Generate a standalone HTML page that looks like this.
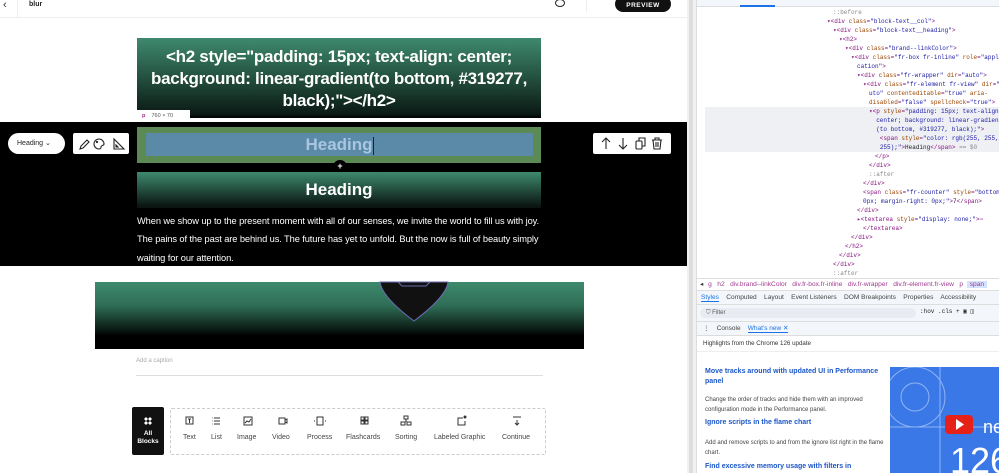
<!DOCTYPE html>
<html><head><meta charset="utf-8"><style>
*{margin:0;padding:0;box-sizing:border-box}
body{width:999px;height:473px;overflow:hidden;background:#fff;font-family:"Liberation Sans",sans-serif;position:relative}
.a{position:absolute}
.mono{font-family:"Liberation Mono",monospace;font-size:6px;color:#881280;white-space:nowrap}
.mono .at{color:#994500}.mono .v{color:#1a1aa6}.mono .t{color:#222}
</style></head><body>
<div class="a" style="left:0;top:0;width:687px;height:18px;background:#fff;border-bottom:1px solid #eee"></div>
<div class="a" style="left:3px;top:-1px;font-size:11px;color:#333">‹</div>
<div class="a" style="left:17px;top:0;width:1px;height:18px;background:#eee"></div>
<div class="a" style="left:29px;top:1px;font-size:7px;font-weight:bold;color:#222">blur</div>
<div class="a" style="left:555px;top:-1px;width:10px;height:8px;border:1.2px solid #222;border-radius:50%"></div>
<div class="a" style="left:586px;top:0;width:1px;height:12px;background:#eee"></div>
<div class="a" style="left:615px;top:-4px;width:56px;height:16px;background:#111;border-radius:8px;color:#fff;font-size:6.5px;font-weight:bold;text-align:center;line-height:19px;letter-spacing:.5px">PREVIEW</div>

<div class="a" style="left:137px;top:38px;width:404px;height:80px;background:linear-gradient(#3e8a6e,#0b1a14 95%,#000);color:#fff;font-size:17px;font-weight:bold;text-align:center;line-height:22px;padding-top:8px;letter-spacing:-.3px">&lt;h2 style="padding: 15px; text-align: center;<br>background: linear-gradient(to bottom, #319277,<br>black);"&gt;&lt;/h2&gt;</div>
<div class="a" style="left:137px;top:110px;width:53px;height:13px;background:#fff;font-size:5.5px;color:#555;line-height:13px;padding-left:5px"><span style="color:#a03090;font-weight:bold">p</span>&nbsp;&nbsp;&nbsp; 760 × 70</div>

<div class="a" style="left:0;top:122px;width:687px;height:144px;background:#000"></div>
<div class="a" style="left:8px;top:133px;width:57px;height:21px;background:#fff;border-radius:11px;font-size:7px;color:#222;line-height:21px;padding-left:9px">Heading <span style="font-size:7px">⌄</span></div>
<div class="a" style="left:73px;top:133px;width:56px;height:21px;background:#fff;border-radius:2px"></div>
<svg class="a" style="left:77px;top:137px" width="50" height="14" viewBox="0 0 50 14" fill="none" stroke="#222" stroke-width="1.1"><path d="M3 12l1-3 6-6 2 2-6 6z"/><path d="M22 12a5 5 0 1 1 5-5c0 2-3 1-3 3s-1 2-2 2z"/><circle cx="20" cy="5" r=".6"/><path d="M37 2v10h10z M39 8v2h2z"/></svg>
<div class="a" style="left:137px;top:127px;width:404px;height:36px;background:#5b8a55"></div>
<div class="a" style="left:146px;top:133px;width:387px;height:23px;background:#5a8aa8;color:#a8c6e0;font-size:17px;font-weight:bold;text-align:center;line-height:23px">Heading<span style="display:inline-block;width:1px;height:18px;background:#222;vertical-align:middle"></span></div>
<div class="a" style="left:333px;top:160px;width:14px;height:14px;border-radius:50%;background:#000;color:#fff;font-size:9px;text-align:center;line-height:12px;font-weight:bold">+</div>
<div class="a" style="left:593px;top:133px;width:78px;height:21px;background:#fff;border-radius:2px"></div>
<svg class="a" style="left:598px;top:136px" width="68" height="15" viewBox="0 0 68 15" fill="none" stroke="#222" stroke-width="1.1"><path d="M8 13V2M4 6l4-4 4 4"/><path d="M25 2v11M21 9l4 4 4-4"/><rect x="38" y="5" width="6" height="8" rx="1"/><path d="M41 5V2h6v8h-3"/><path d="M54 4h10M57 4V2h4v2M55 4l1 9h6l1-9M58 6v5M60 6v5"/></svg>
<div class="a" style="left:137px;top:172px;width:404px;height:36px;background:linear-gradient(#3e8a6e,#0a1511 95%);color:#fff;font-size:17px;font-weight:bold;text-align:center;line-height:36px">Heading</div>
<div class="a" style="left:137px;top:212px;width:410px;color:#fff;font-size:9.3px;line-height:18.3px;letter-spacing:-.1px">When we show up to the present moment with all of our senses, we invite the world to fill us with joy. The pains of the past are behind us. The future has yet to unfold. But the now is full of beauty simply waiting for our attention.</div>

<div class="a" style="left:95px;top:282px;width:489px;height:67px;background:linear-gradient(#3e8a6e 0%,#2f6e56 35%,#0a1812 72%,#000 80%)"></div>
<svg class="a" style="left:378px;top:281px" width="72" height="42" viewBox="0 0 72 42"><path d="M2 1 Q4 16 36 40 Q68 16 70 1z" fill="#111" stroke="#6a6ab0" stroke-width="1"/><path d="M20 1 l4 4 h24 l4 -4" fill="none" stroke="#6a6ab0" stroke-width="1"/></svg>
<div class="a" style="left:136px;top:358px;font-size:6px;color:#aaa">Add a caption</div>
<div class="a" style="left:136px;top:375px;width:407px;height:1px;background:#ddd"></div>

<div class="a" style="left:132px;top:407px;width:32px;height:48px;background:#111;border-radius:2px;color:#fff;font-size:6.5px;font-weight:bold;text-align:center;line-height:8px;padding-top:10px"><div style="width:8px;height:8px;margin:0 auto 5px;background:radial-gradient(#fff 60%,transparent 62%) 0 0/4px 4px"></div>All<br>Blocks</div>
<div class="a" style="left:170px;top:408px;width:376px;height:47px;border:1px dashed #ccc;border-radius:2px"></div>
<div class="a" style="top:434px;left:170px;width:376px;font-size:7px;color:#444">
<span class="a" style="left:13px">Text</span><span class="a" style="left:41px">List</span><span class="a" style="left:67px">Image</span><span class="a" style="left:102px">Video</span><span class="a" style="left:137px">Process</span><span class="a" style="left:176px">Flashcards</span><span class="a" style="left:225px">Sorting</span><span class="a" style="left:264px">Labeled Graphic</span><span class="a" style="left:332px">Continue</span></div>
<svg class="a" style="left:170px;top:415px" width="376" height="12" fill="none" stroke="#333" stroke-width="1"><rect x="16" y="2" width="7" height="7"/><path d="M18 4h3M19.5 4v4"/><path d="M44 3h6M44 6h6M44 9h6M42 3h.5M42 6h.5M42 9h.5"/><rect x="74" y="2" width="8" height="8"/><path d="M75 8l2-2 2 1 2-3"/><rect x="109" y="3" width="6" height="6"/><path d="M115 5l2-1v4l-2-1"/><rect x="147" y="2" width="6" height="8"/><path d="M144 6h1M155 6h1"/><rect x="191" y="2" width="3" height="3"/><rect x="195" y="2" width="3" height="3"/><rect x="191" y="6" width="3" height="3"/><rect x="195" y="6" width="3" height="3"/><rect x="234" y="1" width="4" height="3"/><rect x="231" y="7" width="4" height="3"/><rect x="237" y="7" width="4" height="3"/><path d="M236 4v3"/><path d="M293 3h-5v7h7v-4"/><circle cx="295" cy="2" r="1" fill="#333"/><path d="M343 2h8M347 5v5M345 8l2 2 2-2"/></svg>

<div class="a" style="left:687px;top:0;width:10px;height:473px;background:#f1f1f1;border-right:1px solid #ddd"></div>
<div class="a" style="left:689px;top:0;width:4px;height:473px;background:#ddd"></div>

<div class="a" style="left:697px;top:0;width:302px;height:7px;background:#f3f6fb;border-bottom:1px solid #ddd"></div>
<div class="a" style="left:740px;top:5px;width:35px;height:2px;background:#1a73e8"></div>
<div class="a mono" style="left:697px;top:8px;width:302px;line-height:9px;overflow:hidden">
<div style="padding-left:136px;color:#888">::before</div>
<div style="padding-left:130px">▾&lt;div <span class="at">class</span>=<span class="v">"block-text__col"</span>&gt;</div>
<div style="padding-left:136px">▾&lt;div <span class="at">class</span>=<span class="v">"block-text__heading"</span>&gt;</div>
<div style="padding-left:142px">▾&lt;h2&gt;</div>
<div style="padding-left:148px">▾&lt;div <span class="at">class</span>=<span class="v">"brand--linkColor"</span>&gt;</div>
<div style="padding-left:154px">▾&lt;div <span class="at">class</span>=<span class="v">"fr-box fr-inline"</span> <span class="at">role</span>=<span class="v">"appli</span></div>
<div style="padding-left:160px"><span class="v">cation"</span>&gt;</div>
<div style="padding-left:160px">▾&lt;div <span class="at">class</span>=<span class="v">"fr-wrapper"</span> <span class="at">dir</span>=<span class="v">"auto"</span>&gt;</div>
<div style="padding-left:166px">▾&lt;div <span class="at">class</span>=<span class="v">"fr-element fr-view"</span> <span class="at">dir</span>=<span class="v">"</span></div>
<div style="padding-left:172px"><span class="v">uto"</span> <span class="at">contenteditable</span>=<span class="v">"true"</span> <span class="at">aria-</span></div>
<div style="padding-left:172px"><span class="at">disabled</span>=<span class="v">"false"</span> <span class="at">spellcheck</span>=<span class="v">"true"</span>&gt;</div>
<div style="background:#eef0f3;margin-left:8px;padding-left:164px">▾&lt;p <span class="at">style</span>=<span class="v">"padding: 15px; text-align:</span><br>&nbsp;&nbsp;<span class="v">center; background: linear-gradient</span><br>&nbsp;&nbsp;<span class="v">(to bottom, #319277, black);"</span>&gt;<br>&nbsp;&nbsp;&nbsp;&lt;span <span class="at">style</span>=<span class="v">"color: rgb(255, 255,</span><br>&nbsp;&nbsp;&nbsp;<span class="v">255);"</span>&gt;<span class="t">Heading</span>&lt;/span&gt; <span style="color:#888">== $0</span></div>
<div style="padding-left:178px">&lt;/p&gt;</div>
<div style="padding-left:172px">&lt;/div&gt;</div>
<div style="padding-left:172px;color:#888">::after</div>
<div style="padding-left:166px">&lt;/div&gt;</div>
<div style="padding-left:166px">&lt;span <span class="at">class</span>=<span class="v">"fr-counter"</span> <span class="at">style</span>=<span class="v">"bottom:</span></div>
<div style="padding-left:166px"><span class="v">0px; margin-right: 0px;"</span>&gt;<span class="t">7</span>&lt;/span&gt;</div>
<div style="padding-left:160px">&lt;/div&gt;</div>
<div style="padding-left:160px">▸&lt;textarea <span class="at">style</span>=<span class="v">"display: none;"</span>&gt;⋯</div>
<div style="padding-left:166px">&lt;/textarea&gt;</div>
<div style="padding-left:154px">&lt;/div&gt;</div>
<div style="padding-left:148px">&lt;/h2&gt;</div>
<div style="padding-left:142px">&lt;/div&gt;</div>
<div style="padding-left:136px">&lt;/div&gt;</div>
<div style="padding-left:136px;color:#888">::after</div>
</div>
<div class="a" style="left:697px;top:278px;width:302px;height:13px;background:#fff;border-top:1px solid #ddd;border-bottom:1px solid #ddd;font-size:6.6px;color:#a03a90;line-height:12px;white-space:nowrap;overflow:hidden"><span style="color:#333;padding:0 3px">◂</span> g &nbsp; h2 &nbsp; div.brand--linkColor &nbsp; div.fr-box.fr-inline &nbsp; div.fr-wrapper &nbsp; div.fr-element.fr-view &nbsp; p &nbsp;<span style="background:#d3e3fd;padding:0 3px">span</span></div>
<div class="a" style="left:697px;top:291px;width:302px;height:14px;background:#f3f6fb;border-bottom:1px solid #ddd;font-size:6.6px;color:#444;line-height:13px;white-space:nowrap;padding-left:4px;overflow:hidden"><span style="color:#1a73e8;border-bottom:1.5px solid #1a73e8">Styles</span> &nbsp;&nbsp; Computed &nbsp;&nbsp; Layout &nbsp;&nbsp; Event Listeners &nbsp;&nbsp; DOM Breakpoints &nbsp;&nbsp; Properties &nbsp;&nbsp; Accessibility</div>
<div class="a" style="left:697px;top:305px;width:302px;height:16px;background:#f3f6fb"></div>
<div class="a" style="left:700px;top:308px;width:216px;height:10px;background:#e8ecf2;border-radius:5px;font-size:6px;color:#555;line-height:10px;padding-left:6px">⛉ Filter</div>
<div class="a" style="left:920px;top:308px;font-size:6px;color:#222;font-family:'Liberation Mono',monospace;white-space:nowrap">:hov .cls + ▣ ◫</div>
<div class="a" style="left:697px;top:321px;width:302px;height:15px;background:#f3f6fb;border-top:1px solid #ddd;border-bottom:1px solid #ddd;font-size:6.5px;color:#444;line-height:14px;padding-left:6px;white-space:nowrap">⋮ &nbsp;&nbsp; Console &nbsp;&nbsp; <span style="color:#1a73e8;border-bottom:1.5px solid #1a73e8">What's new ✕</span></div>
<div class="a" style="left:703px;top:340px;font-size:6.2px;color:#333">Highlights from the Chrome 126 update</div>
<div class="a" style="left:697px;top:351px;width:302px;height:1px;background:#eee"></div>
<div class="a" style="left:705px;top:367px;width:180px;font-size:7px;font-weight:bold;color:#1a56c8;line-height:10px">Move tracks around with updated UI in Performance panel</div>
<div class="a" style="left:705px;top:395px;width:180px;font-size:6px;color:#444;line-height:10px">Change the order of tracks and hide them with an improved configuration mode in the Performance panel.</div>
<div class="a" style="left:705px;top:419px;width:180px;font-size:7px;font-weight:bold;color:#1a56c8">Ignore scripts in the flame chart</div>
<div class="a" style="left:705px;top:438px;width:180px;font-size:6px;color:#444;line-height:10px">Add and remove scripts to and from the ignore list right in the flame chart.</div>
<div class="a" style="left:705px;top:463px;width:190px;font-size:7px;font-weight:bold;color:#1a56c8;white-space:nowrap">Find excessive memory usage with filters in</div>
<div class="a" style="left:890px;top:367px;width:109px;height:106px;background:#3b78e7;overflow:hidden">
<svg width="109" height="106"><g fill="none" stroke="#8fb4f5" stroke-width="1"><circle cx="25" cy="30" r="30"/><circle cx="25" cy="30" r="14"/><path d="M0 60h109M50 0v106"/></g><rect x="55" y="48" width="28" height="19" rx="4" fill="#e62117"/><path d="M66 52v11l8-5.5z" fill="#fff"/><text x="93" y="66" font-size="18" fill="#fff" font-family="Liberation Sans">ne</text><text x="60" y="106" font-size="36" fill="#fff" font-family="Liberation Sans">126</text></svg></div>
</body></html>
